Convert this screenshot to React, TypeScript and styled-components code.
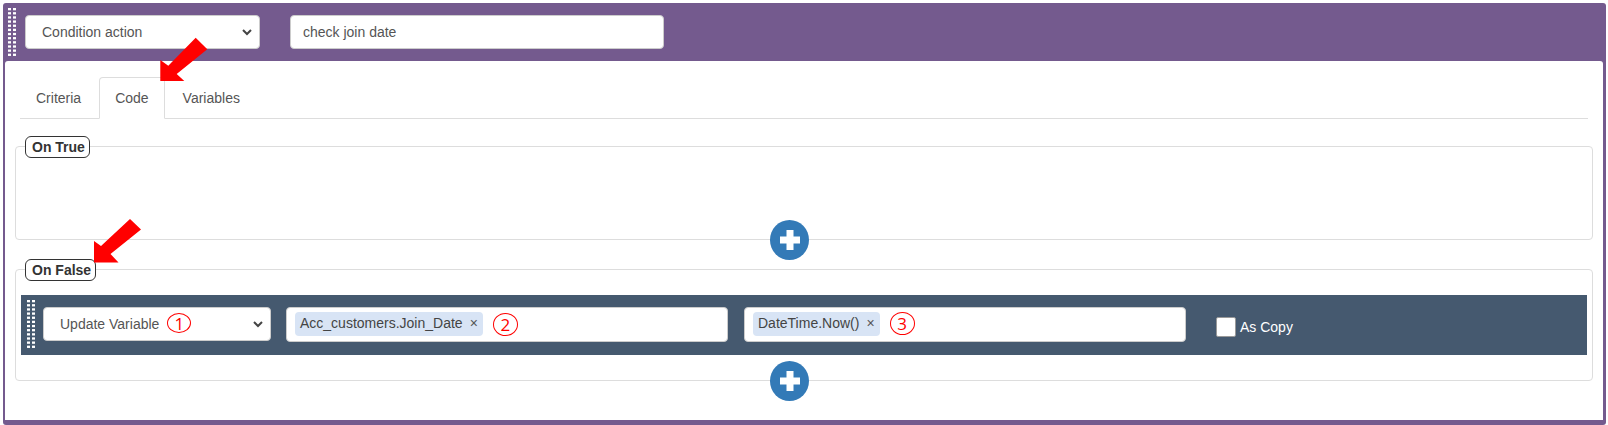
import React from "react";
import styled, { createGlobalStyle } from "styled-components";

const Global = createGlobalStyle`
  html, body { margin: 0; padding: 0; background: #fff; }
  body { font-family: "Liberation Sans", Arial, sans-serif; font-size: 14px; color: #555; }
  * { box-sizing: border-box; }
`;

const Page = styled.div`
  position: relative;
  padding: 3px 2px 0 3px;
  width: 1608px;
  height: 425px;
  overflow: hidden;
`;

const Shell = styled.div`
  background: #745a8e;
  border-radius: 3px;
  height: 422px;
  padding: 0 3px 5px 2px;
  display: flex;
  flex-direction: column;
`;

const Header = styled.div`
  height: 58px;
  flex: none;
  display: flex;
  align-items: center;
  padding-left: 3px;
`;

const GripIcon = styled.svg`
  flex: none;
  display: block;
`;

const Grip = () => (
  <GripIcon width="8" height="48" viewBox="0 0 8 48">
    {Array.from({ length: 12 }).map((_, i) => (
      <g key={i} fill="#fff">
        <rect x="0" y={i * 4.15} width="3" height="2.3" />
        <rect x="5" y={i * 4.15} width="3" height="2.3" />
      </g>
    ))}
  </GripIcon>
);

const NativeSelect = styled.div<{ $w: number; $ml: number }>`
  width: ${(p) => p.$w}px;
  height: 34px;
  margin-left: ${(p) => p.$ml}px;
  background: #fff;
  border: 1px solid #ccc;
  border-radius: 4px;
  display: flex;
  align-items: center;
  padding: 0 7px 0 16px;
  color: #555;
  flex: none;
`;

const SelectLabel = styled.span`
  flex: 1;
  display: flex;
  align-items: center;
  gap: 8px;
`;

const Chevron = () => (
  <svg width="10" height="7" viewBox="0 0 10 7" fill="none">
    <path d="M1 1 L5 5 L9 1" stroke="#444" strokeWidth="2" />
  </svg>
);

const TextBox = styled.div`
  width: 374px;
  height: 34px;
  margin-left: 30px;
  background: #fff;
  border: 1px solid #ccc;
  border-radius: 4px;
  display: flex;
  align-items: center;
  padding: 0 12px;
  color: #555;
`;

const Body = styled.div`
  flex: 1;
  background: #fff;
  border-radius: 3px 3px 0 0;
  padding: 16px 10px 0 10px;
`;

const Tabs = styled.div`
  display: flex;
  height: 42px;
  margin: 0 5px;
  border-bottom: 1px solid #ddd;
`;

const Tab = styled.div<{ $active?: boolean }>`
  height: 42px;
  padding: 0 15px;
  margin-right: 2px;
  display: flex;
  align-items: center;
  border: 1px solid ${(p) => (p.$active ? "#ddd" : "transparent")};
  border-bottom-color: ${(p) => (p.$active ? "#fff" : "transparent")};
  border-radius: 4px 4px 0 0;
  color: #555;
  background: ${(p) => (p.$active ? "#fff" : "transparent")};
`;

const Section = styled.div<{ $h: number; $mt: number }>`
  position: relative;
  height: ${(p) => p.$h}px;
  margin-top: ${(p) => p.$mt}px;
  border: 1px solid #ddd;
  border-radius: 4px;
  padding: 25px 5px 0 5px;
`;

const Legend = styled.div`
  position: absolute;
  left: 9px;
  top: -11px;
  height: 22px;
  padding: 0 4px 0 6px;
  display: flex;
  align-items: center;
  background: #fff;
  border: 1px solid #333;
  border-radius: 6px;
  font-weight: 700;
  color: #333;
`;

const AddButton = styled.div`
  position: absolute;
  left: 754px;
  bottom: -21px;
  width: 39px;
  height: 40px;
  border-radius: 50%;
  background: #337ab7;
  display: flex;
  align-items: center;
  justify-content: center;
`;

const ActionRow = styled.div`
  height: 60px;
  background: #45596f;
  display: flex;
  align-items: center;
  padding: 0 0 2px 6px;
`;

const TagBox = styled.div<{ $ml: number }>`
  width: 442px;
  height: 35px;
  margin-left: ${(p) => p.$ml}px;
  background: #fff;
  border: 1px solid #ccc;
  border-radius: 4px;
  display: flex;
  align-items: center;
  padding-left: 8px;
  gap: 10px;
  flex: none;
`;

const Tag = styled.div`
  height: 24px;
  margin-top: -1px;
  background: #d8e4f5;
  border-radius: 4px;
  padding: 0 5px 2px 5px;
  display: flex;
  align-items: center;
  gap: 7px;
  color: #444;
`;

const TagX = styled.span`
  color: #555;
  font-size: 14px;
`;

const Badge = styled.span<{ $w: number; $h: number; $up?: number }>`
  width: ${(p) => p.$w}px;
  height: ${(p) => p.$h}px;
  margin-top: ${(p) => -(p.$up ?? 0)}px;
  border: 1.75px solid #f00;
  border-radius: 50%;
  color: #f00;
  font-size: 17px;
  font-family: "Open Sans", "Liberation Sans", sans-serif;
  font-weight: 400;
  display: inline-flex;
  align-items: center;
  justify-content: center;
  flex: none;
`;

const CheckLabel = styled.div`
  margin: 6px 0 0 30px;
  display: flex;
  align-items: center;
  gap: 4px;
  color: #fff;
`;

const CheckBox = styled.div`
  width: 20px;
  height: 20px;
  background: #fff;
  border: 1px solid #999;
  border-radius: 2px;
`;

const Overlay = styled.svg`
  position: absolute;
  left: 0;
  top: 0;
  pointer-events: none;
`;

const Plus = () => (
  <svg width="20" height="20" viewBox="0 0 20 20">
    <path d="M6.5 0h7v6.5H20v7h-6.5V20h-7v-6.5H0v-7h6.5z" fill="#fff" />
  </svg>
);

export default function App() {
  return (
    <Page>
      <Global />
      <Shell>
        <Header>
          <Grip />
          <NativeSelect $w={235} $ml={9}>
            <SelectLabel>Condition action</SelectLabel>
            <Chevron />
          </NativeSelect>
          <TextBox>check join date</TextBox>
        </Header>
        <Body>
          <Tabs>
            <Tab>Criteria</Tab>
            <Tab $active>Code</Tab>
            <Tab>Variables</Tab>
          </Tabs>
          <Section $h={94} $mt={27}>
            <Legend>On True</Legend>
            <AddButton><Plus /></AddButton>
          </Section>
          <Section $h={112} $mt={29}>
            <Legend>On False</Legend>
            <ActionRow>
              <Grip />
              <NativeSelect $w={228} $ml={8}>
                <SelectLabel>Update Variable <Badge $w={24} $h={20} $up={2}>1</Badge></SelectLabel>
                <Chevron />
              </NativeSelect>
              <TagBox $ml={15}>
                <Tag>Acc_customers.Join_Date <TagX>×</TagX></Tag>
                <Badge $w={25} $h={23}>2</Badge>
              </TagBox>
              <TagBox $ml={16}>
                <Tag>DateTime.Now() <TagX>×</TagX></Tag>
                <Badge $w={25} $h={23} $up={2}>3</Badge>
              </TagBox>
              <CheckLabel><CheckBox />As Copy</CheckLabel>
            </ActionRow>
            <AddButton><Plus /></AddButton>
          </Section>
        </Body>
      </Shell>
      <Overlay width="1608" height="425" viewBox="0 0 1608 425">
        <polygon points="195.7,37.7 207.3,49.3 176.7,74 184.3,81 160.3,81 160.3,60 168.3,65.7" fill="#f00" />
        <polygon points="130,219 141,229.5 110.5,254 118.5,262.5 94,262.5 94,241 101,246" fill="#f00" />
      </Overlay>
    </Page>
  );
}
